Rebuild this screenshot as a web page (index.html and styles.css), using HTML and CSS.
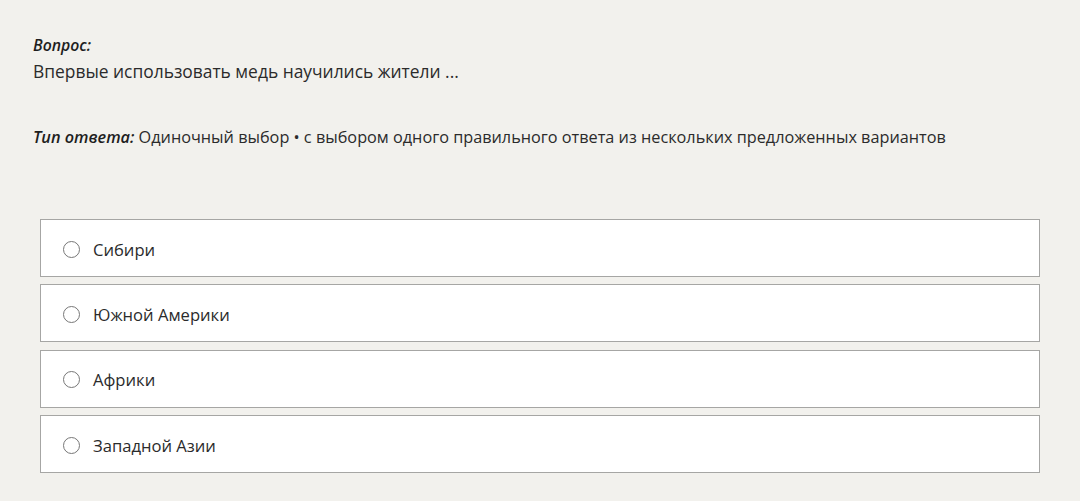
FILE: index.html
```html
<!DOCTYPE html>
<html lang="ru">
<head>
	<meta charset="UTF-8">
	<title>Вопрос</title>
<link rel="stylesheet" href="styles.css">
</head>
<body>
	<div class='quiz'>
		<div class='q-label'>Вопрос:</div>
		<div class='q-text'>Впервые использовать медь научились жители ...</div>
		<div class='q-type'><span class='q-type-label'>Тип ответа:</span> Одиночный выбор • с выбором одного правильного ответа из нескольких предложенных вариантов</div>

		<div class='answers'>
			<label class='answer'>
				<span class='radio'></span>
				<span class='answer-text'>Сибири</span>
			</label>
			<label class='answer'>
				<span class='radio'></span>
				<span class='answer-text'>Южной Америки</span>
			</label>
			<label class='answer'>
				<span class='radio'></span>
				<span class='answer-text'>Африки</span>
			</label>
			<label class='answer'>
				<span class='radio'></span>
				<span class='answer-text'>Западной Азии</span>
			</label>
		</div>
	</div>
</body>
</html>
```
FILE: styles.css
```css
html,body{
	margin:0;
	padding:0;
	background-color:#f2f1ed;
}
.quiz{
	padding:35px 33px 0 33px;
	font-family:"Open Sans","Noto Sans",sans-serif;
	color:#2b2b2b;
}
.q-label{
	font-size:15.8px;
	font-weight:600;
	font-style:italic;
	line-height:20px;
	color:#1e1e1e;
}
.q-text{
	font-size:17.4px;
	line-height:32px;
}
.q-type{
	margin-top:38px;
	font-size:16.25px;
	line-height:24px;
}
.q-type-label{
	font-weight:600;
	font-style:italic;
	color:#1e1e1e;
}
.answers{
	display:flex;
	flex-direction:column;
	gap:7.4px;
	margin:70px 7px 0 7px;
}
.answer{
	display:flex;
	align-items:center;
	box-sizing:border-box;
	height:58px;
	padding-top:2px;
	background-color:#fff;
	border:1px solid #a6a6a4;
	cursor:pointer;
}
.radio{
	box-sizing:border-box;
	width:17px;
	height:17px;
	margin-left:22px;
	margin-right:13px;
	border:1px solid #777;
	border-radius:50%;
}
.answer-text{
	font-size:16.6px;
	color:#2b2b2b;
}
```
